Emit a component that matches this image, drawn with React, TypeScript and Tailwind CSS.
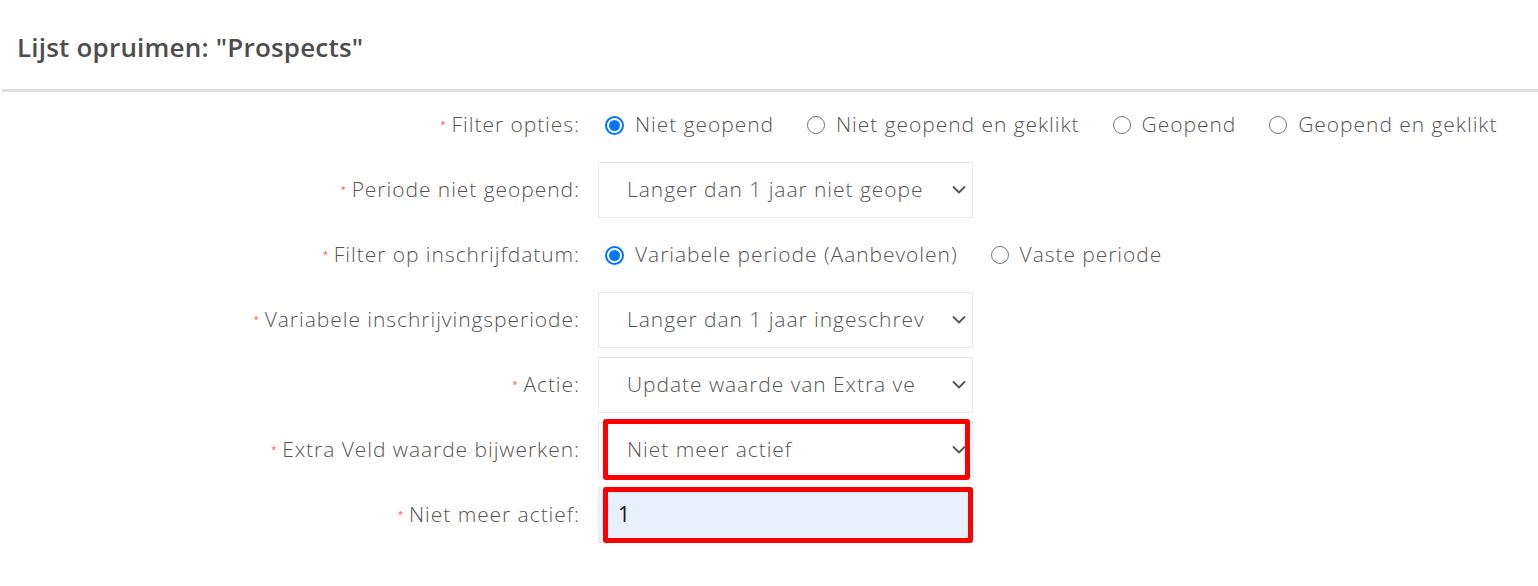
import React from "react";

const Star = () => (
  <span className="mr-[6px] text-[9px] leading-none text-[#f44] relative -top-[1px]">*</span>
);

const TXT = "text-[21px] tracking-[0.95px] font-light";

function Label({ text }: { text: string }) {
  return (
    <div className="flex items-center justify-end text-[#555] whitespace-nowrap">
      <Star />
      <span className={TXT}>{text}</span>
    </div>
  );
}

function Radio({ checked, label }: { checked?: boolean; label: string }) {
  return (
    <div className="flex items-center">
      {checked ? (
        <span className="w-[19px] h-[19px] rounded-full border-[2px] border-[#0075ff] flex items-center justify-center">
          <span className="w-[11px] h-[11px] rounded-full bg-[#0075ff]" />
        </span>
      ) : (
        <span className="w-[18px] h-[18px] rounded-full border-[1.5px] border-[#767676]" />
      )}
      <span className={`ml-[11px] ${TXT} text-[#555] whitespace-nowrap`}>{label}</span>
    </div>
  );
}

function Chevron() {
  return (
    <svg
      className="absolute right-[6px] top-1/2 -translate-y-1/2"
      width="14"
      height="9"
      viewBox="0 0 14 9"
      fill="none"
    >
      <path d="M1.5 1.5 L7 7 L12.5 1.5" stroke="#555" strokeWidth="1.8" strokeLinecap="round" strokeLinejoin="round" />
    </svg>
  );
}

function Select({ value, highlight }: { value: string; highlight?: boolean }) {
  return (
    <div className="relative w-[375px] h-[56px] border border-[#ebebeb] bg-white">
      <div className={`absolute left-[28px] top-0 bottom-0 right-[18px] flex items-center overflow-hidden whitespace-nowrap ${TXT} text-[#555]`}>
        {value}
      </div>
      <Chevron />
      {highlight && (
        <div className="absolute left-[4px] right-[2px] -top-[4px] -bottom-[3px] border-[5px] border-[#ff0000] rounded-[3px]" />
      )}
    </div>
  );
}

function Row({ label, children }: { label: string; children: React.ReactNode }) {
  return (
    <div className="grid grid-cols-[580px_1fr] gap-x-[18px] h-[56px] items-center">
      <Label text={label} />
      <div className="flex items-center">{children}</div>
    </div>
  );
}

export default function App() {
  return (
    <div className="w-[1538px] h-[586px] bg-white overflow-hidden font-['Open_Sans',sans-serif]">
      <div className="h-[89px] flex items-center pl-[17px] pt-[6px]">
        <h1 className="text-[26px] font-semibold text-[#4d4d4d] tracking-[0.2px]">
          Lijst opruimen: "Prospects"
        </h1>
      </div>
      <div className="ml-[2px] h-[3px] bg-[#dedede]" />
      <div className="pt-[5px] flex flex-col gap-[9px]">
        <Row label="Filter opties:">
          <div className="flex items-center gap-[33px] pl-[7px]">
            <Radio checked label="Niet geopend" />
            <Radio label="Niet geopend en geklikt" />
            <Radio label="Geopend" />
            <Radio label="Geopend en geklikt" />
          </div>
        </Row>
        <Row label="Periode niet geopend:">
          <Select value="Langer dan 1 jaar niet geope" />
        </Row>
        <Row label="Filter op inschrijfdatum:">
          <div className="flex items-center gap-[33px] pl-[7px]">
            <Radio checked label="Variabele periode (Aanbevolen)" />
            <Radio label="Vaste periode" />
          </div>
        </Row>
        <Row label="Variabele inschrijvingsperiode:">
          <Select value="Langer dan 1 jaar ingeschrev" />
        </Row>
        <Row label="Actie:">
          <Select value="Update waarde van Extra ve" />
        </Row>
        <Row label="Extra Veld waarde bijwerken:">
          <Select value="Niet meer actief" highlight />
        </Row>
        <Row label="Niet meer actief:">
          <div className="relative w-[375px] h-[56px] border border-[#ebebeb] bg-[#e8f0fe]">
            <div className="absolute left-[19px] top-0 bottom-0 flex items-center text-[21px] text-[#111]">1</div>
            <div className="absolute left-[4px] -right-[1px] -top-[1px] -bottom-[1px] border-[5px] border-[#ff0000] rounded-[3px]" />
          </div>
        </Row>
      </div>
    </div>
  );
}
